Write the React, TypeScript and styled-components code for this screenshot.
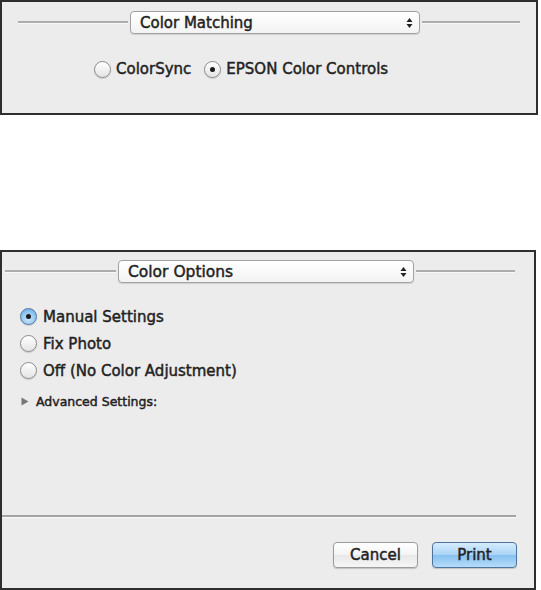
import React from "react"
import styled, { createGlobalStyle, css } from "styled-components"

const GlobalStyle = createGlobalStyle`
	html, body {
		margin: 0;
		padding: 0;
		background: #ffffff;
	}
	body {
		font-family: "DejaVu Sans", "Liberation Sans", sans-serif;
		color: #1e1e1e;
	}
	* {
		box-sizing: border-box;
	}
`

// the reference is a blurry upscaled shot, a thin stroke gives the same heavier look
const heavyText = css`
	font-weight: normal;
	color: #222;
	-webkit-text-stroke: 0.45px #222;
`

const Page = styled.div`
	width: 541px;
	height: 590px;
	display: flex;
	flex-direction: column;
	justify-content: space-between;
	overflow: hidden;
`

type SheetProps = {
	$width: number
	$height: number
}
const Sheet = styled.div<SheetProps>`
	width: ${props => props.$width}px;
	height: ${props => props.$height}px;
	background-color: #ececec;
	border: 2px solid #2e2e2e;
	display: flex;
	flex-direction: column;
`

type HeaderRowProps = {
	$top: number
	$left: number
	$right: number
}
const HeaderRow = styled.div<HeaderRowProps>`
	display: flex;
	align-items: center;
	gap: 2px;
	padding: ${props => props.$top}px ${props => props.$right}px 0 ${props => props.$left}px;
`

const Rule = styled.div<{ $width?: number }>`
	height: 2px;
	background-color: #adadad;
	border-bottom: 1px solid #f8f8f8;
	box-sizing: content-box;
	${props => props.$width ? css`width: ${props.$width}px;` : css`flex: 1;`}
`

const Popup = styled.div<{ $width: number, $size: number }>`
	width: ${props => props.$width}px;
	height: 23px;
	display: flex;
	align-items: center;
	justify-content: space-between;
	padding: 0 6px 0 9px;
	border: 1px solid #a2a2a2;
	border-radius: 4px;
	background: linear-gradient(#ffffff, #f3f3f3);
	box-shadow: 0 1px 1px rgba(0, 0, 0, 0.12);
	font-size: ${props => props.$size}px;
	${heavyText}
`

function PopupArrows() {
	return <svg width="7" height="12" viewBox="0 0 7 12">
		<path d="M3.5 1 L6.5 5 L0.5 5 Z" fill="#222" />
		<path d="M3.5 11 L6.5 7 L0.5 7 Z" fill="#222" />
	</svg>
}

const RadioGroup = styled.div<{ $top: number, $left: number }>`
	display: flex;
	align-items: center;
	margin-top: ${props => props.$top}px;
	padding-left: ${props => props.$left}px;
	gap: 13px;
`

const RadioList = styled.div<{ $top: number, $left: number }>`
	display: flex;
	flex-direction: column;
	margin-top: ${props => props.$top}px;
	padding-left: ${props => props.$left}px;
`

const RadioRow = styled.label<{ $height?: number, $gap: number }>`
	display: flex;
	align-items: center;
	gap: ${props => props.$gap}px;
	height: ${props => props.$height ? `${props.$height}px` : 'auto'};
	font-size: 15px;
	white-space: nowrap;
	${heavyText}
`

const RadioCircle = styled.span<{ $checked?: boolean, $accent?: boolean }>`
	position: relative;
	width: 17px;
	height: 17px;
	border-radius: 50%;
	flex-shrink: 0;
	-webkit-text-stroke: 0;
	border: 1px solid ${props => props.$accent ? '#4f77a3' : '#8c8c8c'};
	background: ${props => props.$accent
		? 'radial-gradient(circle at 50% 70%, #c6e4fb 0%, #92c7f1 55%, #62a1dc 100%)'
		: 'linear-gradient(#ffffff, #e4e4e4)'};
	box-shadow: 0 1px 1px rgba(0, 0, 0, 0.15);

	&::after {
		content: "";
		display: ${props => props.$checked ? 'block' : 'none'};
		position: absolute;
		left: 50%;
		top: 50%;
		width: 5px;
		height: 5px;
		margin: -2.5px 0 0 -2.5px;
		border-radius: 50%;
		background: #1a1a1a;
	}
`

type RadioProps = {
	label: string
	checked?: boolean
	accent?: boolean
	height?: number
	gap?: number
}
function Radio(props: RadioProps) {
	return <RadioRow $height={props.height} $gap={props.gap ?? 5}>
		<RadioCircle $checked={props.checked} $accent={props.accent} />
		{props.label}
	</RadioRow>
}

const Disclosure = styled.div`
	display: flex;
	align-items: center;
	gap: 7px;
	height: 16px;
	margin-top: 9px;
	padding-left: 19px;
	font-size: 12.5px;
	${heavyText}
`

const Footer = styled.div`
	margin-top: auto;
	display: flex;
	flex-direction: column;
	padding-bottom: 20px;
`

const FooterRule = styled.div`
	height: 2px;
	width: 514px;
	background-color: #a4a4a4;
	border-bottom: 1px solid #f8f8f8;
	box-sizing: content-box;
`

const ButtonRow = styled.div`
	display: flex;
	justify-content: flex-end;
	gap: 14px;
	margin-top: 24px;
	padding-right: 17px;
`

const Button = styled.button<{ $primary?: boolean }>`
	width: 85px;
	height: 26px;
	border-radius: 4px;
	font-family: "DejaVu Sans", sans-serif;
	font-size: 15px;
	${heavyText}
	border: 1px solid ${props => props.$primary ? '#50739c' : '#9c9c9c'};
	background: ${props => props.$primary
		? 'linear-gradient(#d6ecfd 0%, #a9d3f6 50%, #86c0f0 51%, #b5dcfa 100%)'
		: 'linear-gradient(#ffffff 0%, #f4f4f4 50%, #e8e8e8 51%, #f6f6f6 100%)'};
	box-shadow: 0 1px 1px rgba(0, 0, 0, 0.18);
	padding: 0;
`

export default function App() {
	return <>
		<GlobalStyle />
		<Page>
			<Sheet $width={538} $height={115}>
				<HeaderRow $top={9} $left={16} $right={16}>
					<Rule $width={110} />
					<Popup $width={290} $size={15}>
						Color Matching
						<PopupArrows />
					</Popup>
					<Rule />
				</HeaderRow>
				<RadioGroup $top={26} $left={92}>
					<Radio label="ColorSync" />
					<Radio label="EPSON Color Controls" checked />
				</RadioGroup>
			</Sheet>

			<Sheet $width={536} $height={340}>
				<HeaderRow $top={8} $left={3} $right={19}>
					<Rule $width={111} />
					<Popup $width={296} $size={15.5}>
						Color Options
						<PopupArrows />
					</Popup>
					<Rule />
				</HeaderRow>
				<RadioList $top={20} $left={18}>
					<Radio label="Manual Settings" checked accent height={27} gap={6} />
					<Radio label="Fix Photo" height={27} gap={6} />
					<Radio label="Off (No Color Adjustment)" height={27} gap={6} />
				</RadioList>
				<Disclosure>
					<svg width="8" height="9" viewBox="0 0 8 9">
						<path d="M0.5 0.5 L7.5 4.5 L0.5 8.5 Z" fill="#777" />
					</svg>
					Advanced Settings:
				</Disclosure>
				<Footer>
					<FooterRule />
					<ButtonRow>
						<Button>Cancel</Button>
						<Button $primary>Print</Button>
					</ButtonRow>
				</Footer>
			</Sheet>
		</Page>
	</>
}
